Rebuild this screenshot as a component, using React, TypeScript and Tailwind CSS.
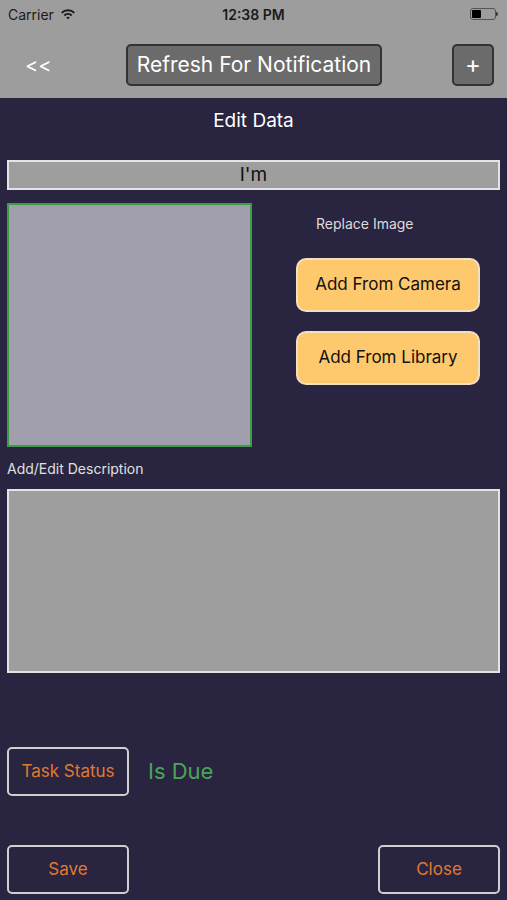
import React from "react";

function Wifi() {
  return (
    <svg width="16" height="12" viewBox="0 0 16 12" className="ml-1.5">
      <path d="M1 4.2 A10 10 0 0 1 15 4.2 L13.6 5.6 A8 8 0 0 0 2.4 5.6 Z" fill="#1a1a1a" />
      <path d="M3.6 6.8 A6.4 6.4 0 0 1 12.4 6.8 L11 8.2 A4.4 4.4 0 0 0 5 8.2 Z" fill="#1a1a1a" />
      <path d="M6.2 9.4 A2.8 2.8 0 0 1 9.8 9.4 L8 11.3 Z" fill="#1a1a1a" />
    </svg>
  );
}

function Battery() {
  return (
    <div className="flex items-center">
      <div className="w-[26px] h-[12px] border border-[#555] rounded-[3px] p-[1px] flex">
        <div className="w-[9px] h-full bg-black rounded-[1px]" />
      </div>
      <div className="w-[2px] h-[4px] bg-[#333] rounded-r-sm" />
    </div>
  );
}

export default function App() {
  const font = { fontFamily: "Inter, 'Noto Sans', 'Liberation Sans', sans-serif" };
  return (
    <div className="w-[507px] h-[900px] bg-[#29243f] flex flex-col overflow-hidden" style={font}>
      {/* header */}
      <div className="bg-[#9d9d9d] h-[98px] flex flex-col">
        <div className="h-[28px] flex items-center justify-between px-[8px] text-[14px] text-[#1a1a1a]">
          <div className="flex items-center w-[120px]">
            Carrier
            <Wifi />
          </div>
          <div className="font-semibold">12:38 PM</div>
          <div className="w-[120px] flex justify-end pr-[1px]">
            <Battery />
          </div>
        </div>
        <div className="flex-1 flex items-center pl-[25px] pr-[13px] pt-[4px]">
          <span className="text-white text-[20px] w-[101px]">&lt;&lt;</span>
          <div className="w-[256px] h-[42px] bg-[#6b6b6b] border-2 border-[#333] rounded-[5px] flex items-center justify-center text-white text-[21px]">
            Refresh For Notification
          </div>
          <div className="ml-auto w-[42px] h-[42px] bg-[#6b6b6b] border-2 border-[#333] rounded-[5px] flex items-center justify-center text-white text-[24px]">
            +
          </div>
        </div>
      </div>

      {/* body */}
      <div className="flex-1 flex flex-col px-[7px]">
        <div className="text-white text-center text-[19px] mt-[10px] h-[26px] leading-[26px]">Edit Data</div>
        <div className="mt-[26px] h-[30px] bg-[#9e9e9e] border-2 border-[#e4e4e4] flex items-center justify-center text-[19px] text-[#111]">
          I'm
        </div>
        <div className="flex mt-[13px]">
          <div className="w-[245px] h-[244px] bg-[#a19fae] border-2 border-[#3c9c48]" />
          <div className="flex-1 flex flex-col items-start pl-[44px]">
            <div className="text-[#dcdcdc] text-[14px] mt-[10px] pl-[20px]">Replace Image</div>
            <div className="mt-[24px] w-[184px] h-[54px] bg-[#fec86d] border-2 border-[#f3e0c0] rounded-[10px] flex items-center justify-center text-[17px] text-[#111]">
              Add From Camera
            </div>
            <div className="mt-[19px] w-[184px] h-[54px] bg-[#fec86d] border-2 border-[#f3e0c0] rounded-[10px] flex items-center justify-center text-[17px] text-[#111]">
              Add From Library
            </div>
          </div>
        </div>
        <div className="text-[#e0e0e0] text-[14px] mt-[11px] h-[20px]">Add/Edit Description</div>
        <div className="mt-[11px] h-[184px] bg-[#9e9e9e] border-2 border-[#e4e4e4]" />
        <div className="flex items-center mt-[74px]">
          <div className="w-[122px] h-[49px] border-2 border-[#cfcfcf] rounded-[5px] flex items-center justify-center text-[#e07a30] text-[17px]">
            Task Status
          </div>
          <span className="ml-[19px] text-[#4aa55a] text-[22px]">Is Due</span>
        </div>
        <div className="flex justify-between mt-[49px]">
          <div className="w-[122px] h-[49px] border-2 border-[#cfcfcf] rounded-[5px] flex items-center justify-center text-[#e07a30] text-[17px]">
            Save
          </div>
          <div className="w-[122px] h-[49px] border-2 border-[#cfcfcf] rounded-[5px] flex items-center justify-center text-[#e07a30] text-[17px]">
            Close
          </div>
        </div>
      </div>
    </div>
  );
}
